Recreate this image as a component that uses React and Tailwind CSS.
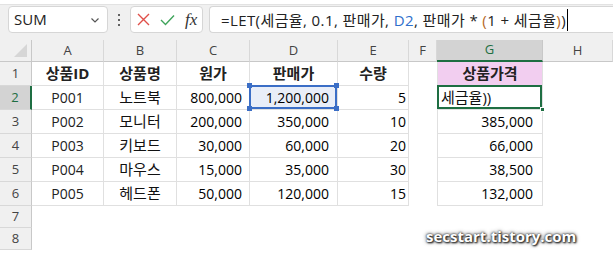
import React from "react";

const COLS = ["A", "B", "C", "D", "E", "F", "G", "H"];
const ROWS = [
  ["P001", "노트북", "800,000", "1,200,000", "5", "세금율))"],
  ["P002", "모니터", "200,000", "350,000", "10", "385,000"],
  ["P003", "키보드", "30,000", "60,000", "20", "66,000"],
  ["P004", "마우스", "15,000", "35,000", "30", "38,500"],
  ["P005", "헤드폰", "50,000", "120,000", "15", "132,000"],
];

function Corner({ pos }) {
  return (
    <div className={`absolute w-[5px] h-[5px] bg-[#3b6ec6] ${pos}`} />
  );
}

export default function App() {
  return (
    <div className="relative w-[613px] h-[253px] overflow-hidden bg-white font-['Open_Sans','Noto_Sans_CJK_KR',sans-serif] text-black">
      {/* toolbar */}
      <div className="h-[40px] bg-[#f0f0f0] border-t border-[#e2e2e2] mt-[4px] -mb-[4px] flex items-start pt-[1px] pl-[8px] gap-0">
        <div className="w-[100px] h-[27px] bg-white border border-[#d6d6d6] rounded-[4px] flex items-center justify-between pl-[5px] pr-[6px]">
          <span className="text-[15px] text-[#222]">SUM</span>
          <svg width="12" height="12" viewBox="0 0 12 12">
            <path d="M2.5 4.5 L6 8 L9.5 4.5" fill="none" stroke="#555" strokeWidth="1.2" />
          </svg>
        </div>
        <div className="w-[22px] h-[27px] flex flex-col items-center justify-center gap-[3px]">
          <div className="w-[2px] h-[2px] bg-[#333] rounded-full" />
          <div className="w-[2px] h-[2px] bg-[#333] rounded-full" />
          <div className="w-[2px] h-[2px] bg-[#333] rounded-full" />
        </div>
        <div className="w-[73px] h-[27px] bg-white border border-[#d6d6d6] rounded-[4px] flex items-center pl-[6px] gap-[10px]">
          <svg width="13" height="13" viewBox="0 0 13 13">
            <path d="M1 1 L12 12 M12 1 L1 12" stroke="#e0504a" strokeWidth="1.4" fill="none" />
          </svg>
          <svg width="15" height="12" viewBox="0 0 15 12">
            <path d="M1 6 L5.5 10.5 L14 1.5" stroke="#3fa45b" strokeWidth="1.4" fill="none" />
          </svg>
          <span className="font-['Liberation_Serif',serif] italic text-[17px] text-[#333] leading-none">fx</span>
        </div>
        <div className="ml-[6px] flex-1 h-[27px] bg-white border border-[#d6d6d6] rounded-l-[4px] border-r-0 flex items-center pl-[11px]">
          <div className="text-[15px] tracking-[0.4px] text-[#222] whitespace-pre leading-[22px] flex items-center">
            <span className="whitespace-pre">{"=LET(세금율, 0.1, 판매가, "}<span className="text-[#2f6fcc]">D2</span>{", 판매가 * "}<span className="text-[#b5651d]">(</span>{"1 + 세금율"}<span className="text-[#b5651d]">)</span>{")"}</span>
            <span className="inline-block w-[1px] h-[22px] bg-black ml-[1px]" />
          </div>
        </div>
      </div>

      {/* grid */}
      <div className="grid grid-cols-[32px_72px_73px_73px_88px_71px_28px_106px_1fr] grid-rows-[22px_24px_24px_24px_24px_24px_24px_22px_22px] text-[14px]">
        {/* header row */}
        <div className="relative bg-[#f0f0f0] border-r border-b border-[#c8c8c8]">
          <svg className="absolute right-[4px] bottom-[4px]" width="13" height="13" viewBox="0 0 13 13">
            <path d="M13 0 L13 13 L0 13 Z" fill="#d6d6d6" />
          </svg>
        </div>
        {COLS.map((c) =>
          c === "G" ? (
            <div key={c} className="bg-[#d3d3d3] border-b-2 border-[#1e6e42] border-r border-r-[#c8c8c8] flex items-center justify-center text-[13px] text-[#1e6e42]">
              {c}
            </div>
          ) : (
            <div key={c} className="bg-[#f0f0f0] border-r border-b border-[#d8d8d8] border-b-[#c8c8c8] flex items-center justify-center text-[13px] text-[#444]">
              {c}
            </div>
          )
        )}

        {/* row 1 */}
        <div className="bg-[#f0f0f0] border-r border-b border-[#c8c8c8] border-b-[#d8d8d8] flex items-center justify-center text-[13px] text-[#444]">1</div>
        {["상품ID", "상품명", "원가", "판매가", "수량"].map((t) => (
          <div key={t} className="border-r border-b border-[#e0e0e0] flex items-center justify-center font-bold text-[15px] text-[#222]">
            {t}
          </div>
        ))}
        <div />
        <div className="bg-[#f2cef0] border-l border-r border-b border-[#e0e0e0] flex items-center justify-center font-bold text-[15px] text-[#222]">상품가격</div>
        <div />

        {/* data rows */}
        {ROWS.map((r, i) => {
          const n = i + 2;
          const active = n === 2;
          return (
            <React.Fragment key={n}>
              {active ? (
                <div className="bg-[#d3d3d3] border-r-2 border-r-[#1e6e42] border-b border-b-[#d8d8d8] flex items-center justify-center text-[13px] text-[#1e6e42]">{n}</div>
              ) : (
                <div className="bg-[#f0f0f0] border-r border-b border-[#c8c8c8] border-b-[#d8d8d8] flex items-center justify-center text-[13px] text-[#444]">{n}</div>
              )}
              <div className="border-r border-b border-[#e0e0e0] flex items-center justify-center text-[#222]">{r[0]}</div>
              <div className="border-r border-b border-[#e0e0e0] flex items-center justify-center text-[15px] text-[#111]">{r[1]}</div>
              <div className="border-r border-b border-[#e0e0e0] flex items-center justify-end pr-[7px]">{r[2]}</div>
              {active ? (
                <div className="relative border-r border-b border-[#e0e0e0] flex items-center justify-end pr-[8px] bg-[#e9eef8]">
                  <div className="absolute -left-[1px] -top-[1px] right-0 bottom-0 border-2 border-[#3b6ec6]" />
                  <Corner pos="-left-[3px] -top-[3px]" />
                  <Corner pos="-right-[2px] -top-[3px]" />
                  <Corner pos="-left-[3px] -bottom-[2px]" />
                  <Corner pos="-right-[2px] -bottom-[2px]" />
                  <span className="relative">{r[3]}</span>
                </div>
              ) : (
                <div className="border-r border-b border-[#e0e0e0] flex items-center justify-end pr-[8px]">{r[3]}</div>
              )}
              <div className="border-r border-b border-[#e0e0e0] flex items-center justify-end pr-[2px]">{r[4]}</div>
              <div />
              {active ? (
                <div className="relative border-l border-r border-b border-[#e0e0e0] flex items-center pl-[3px] text-[15px] text-[#111]">
                  <div className="absolute -left-[1px] -top-[1px] right-0 bottom-0 border-2 border-[#1e6e42]" />
                  <div className="absolute -right-[3px] -bottom-[3px] w-[5px] h-[5px] bg-[#1e6e42] border border-white" />
                  <span className="relative">{r[5]}</span>
                </div>
              ) : (
                <div className="border-l border-r border-b border-[#e0e0e0] flex items-center justify-end pr-[9px]">{r[5]}</div>
              )}
              <div />
            </React.Fragment>
          );
        })}

        {/* rows 7,8 */}
        {[7, 8].map((n) => (
          <React.Fragment key={n}>
            <div className="bg-[#f0f0f0] border-r border-b border-[#c8c8c8] border-b-[#d8d8d8] flex items-center justify-center text-[13px] text-[#444]">{n}</div>
            <div className="col-span-8" />
          </React.Fragment>
        ))}
      </div>

      {/* watermark */}
      <div className="absolute left-[426px] top-[225px] text-[15px] font-bold text-white [text-shadow:0_0_2px_#222,0_0_4px_#444,1px_1px_2px_#000]">
        secstart.tistory.com
      </div>
    </div>
  );
}
